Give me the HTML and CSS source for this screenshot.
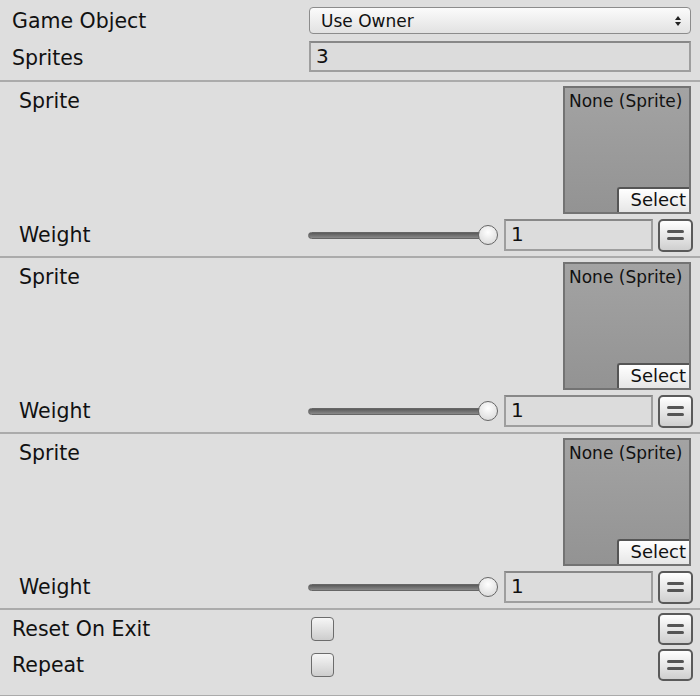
FILE: index.html
```html
<!DOCTYPE html>
<html>
<head>
<meta charset="utf-8">
<link rel="stylesheet" href="styles.css">
</head>
<body>
<div class="inspector">
  <div class="top">
    <div class="row row-go">
      <span class="label">Game Object</span>
      <div class="popup"><span>Use Owner</span>
        <svg class="arrows" width="8" height="12" viewBox="0 0 8 12"><path d="M4 1 L7 5 L1 5 Z M4 11 L7 7 L1 7 Z" fill="#222"/></svg>
      </div>
    </div>
    <div class="row row-sprites">
      <span class="label">Sprites</span>
      <div class="field">3</div>
    </div>
  </div>

  <div class="section">
    <div class="sprite-row">
      <span class="label">Sprite</span>
      <div class="sprite-box"><span class="none">None (Sprite)</span><div class="select">Select</div></div>
    </div>
    <div class="weight-row">
      <span class="label wlabel">Weight</span>
      <div class="slider"><div class="track"></div><div class="thumb"></div></div>
      <div class="field num">1</div>
      <div class="eqbtn"><i></i><i></i></div>
    </div>
  </div>

  <div class="section">
    <div class="sprite-row">
      <span class="label">Sprite</span>
      <div class="sprite-box"><span class="none">None (Sprite)</span><div class="select">Select</div></div>
    </div>
    <div class="weight-row">
      <span class="label wlabel">Weight</span>
      <div class="slider"><div class="track"></div><div class="thumb"></div></div>
      <div class="field num">1</div>
      <div class="eqbtn"><i></i><i></i></div>
    </div>
  </div>

  <div class="section">
    <div class="sprite-row">
      <span class="label">Sprite</span>
      <div class="sprite-box"><span class="none">None (Sprite)</span><div class="select">Select</div></div>
    </div>
    <div class="weight-row">
      <span class="label wlabel">Weight</span>
      <div class="slider"><div class="track"></div><div class="thumb"></div></div>
      <div class="field num">1</div>
      <div class="eqbtn"><i></i><i></i></div>
    </div>
  </div>

  <div class="bottom">
    <div class="crow">
      <span class="label">Reset On Exit</span>
      <div class="check"></div>
      <div class="eqbtn"><i></i><i></i></div>
    </div>
    <div class="crow">
      <span class="label">Repeat</span>
      <div class="check"></div>
      <div class="eqbtn"><i></i><i></i></div>
    </div>
  </div>
</div>
</body>
</html>
```

FILE: styles.css
```css
* { box-sizing: border-box; }
html, body { margin: 0; padding: 0; }
body {
  background: #dedede;
  font-family: "DejaVu Sans", "Liberation Sans", sans-serif;
  color: #111;
  width: 700px;
  height: 696px;
  overflow: hidden;
}
.label { font-size: 20.5px; line-height: 24px; }

.top { border-bottom: 2px solid #ababab; padding: 0 9px 6px 12px; }
.row { display: flex; align-items: center; }
.row .label { width: 297px; flex: none; }
.row-go { height: 38px; padding-top: 3px; }
.row-sprites { height: 36px; }
.row-sprites .label { padding-top: 3px; }

.popup {
  flex: 1;
  height: 27px;
  border: 1px solid #8c8c8c;
  border-radius: 4px;
  background: linear-gradient(#fbfbfb, #e2e2e2);
  display: flex;
  align-items: center;
  justify-content: space-between;
  padding: 0 8px 0 11px;
  font-size: 17px;
}
.field {
  flex: 1;
  height: 31px;
  background: #dcdcdc;
  border: 2px solid #9e9e9e;
  border-top-color: #888;
  font-size: 20px;
  line-height: 26px;
  padding-left: 5px;
}

.section {
  height: 176px;
  border-bottom: 2px solid #ababab;
  padding: 4px 7px 0 19px;
}
.sprite-row { display: flex; justify-content: space-between; height: 128px; padding-right: 2px; }
.sprite-row .label { margin-top: 3px; }
.sprite-box {
  width: 128px;
  height: 128px;
  background: linear-gradient(#a3a3a3, #939393);
  border: 2px solid #737373;
  position: relative;
  font-size: 17px;
}
.none { position: absolute; left: 4px; top: 3px; white-space: nowrap; }
.select {
  position: absolute;
  right: 0; bottom: 0;
  width: 72px; height: 25px;
  background: linear-gradient(#ffffff, #e6e6e6);
  border-left: 2px solid #555;
  border-top: 2px solid #555;
  border-radius: 3px 0 0 0;
  font-size: 18px;
  line-height: 22px;
  text-align: right;
  padding-right: 3px;
}

.weight-row { display: flex; align-items: center; height: 34px; margin-top: 4px; }
.wlabel { width: 289px; flex: none; padding-top: 0; }
.slider { position: relative; width: 190px; height: 22px; flex: none; }
.track {
  position: absolute; left: 0; top: 8px; width: 182px; height: 7px;
  border-radius: 4px;
  background: linear-gradient(#5a5a5a, #8a8a8a);
  border: 1px solid #666;
}
.thumb {
  position: absolute; left: 170px; top: 1px; width: 20px; height: 20px;
  border-radius: 50%;
  background: radial-gradient(circle at 50% 35%, #ffffff, #d4d4d4);
  border: 1px solid #666;
}
.num { flex: none; width: 149px; margin-left: 6px; height: 32px; }
.eqbtn {
  flex: none;
  width: 35px; height: 33px;
  margin-left: 5px;
  border: 2px solid #5a5a5a;
  border-radius: 5px;
  background: linear-gradient(#ffffff, #cfcfcf);
  display: flex; flex-direction: column; align-items: center; justify-content: center; gap: 4px;
}
.eqbtn i { display: block; width: 17px; height: 3px; border-radius: 2px; background: #555; }

.bottom { padding: 1px 7px 0 12px; border-bottom: 2px solid #ababab; height: 87px; }
.crow { display: flex; align-items: center; height: 36px; }
.crow .label { width: 299px; flex: none; }
.check {
  width: 23px; height: 24px;
  border: 1px solid #6c6c6c;
  border-radius: 4px;
  background: linear-gradient(#f6f6f6, #cdcdcd);
}
.crow .eqbtn { margin-left: auto; height: 32px; }
```
